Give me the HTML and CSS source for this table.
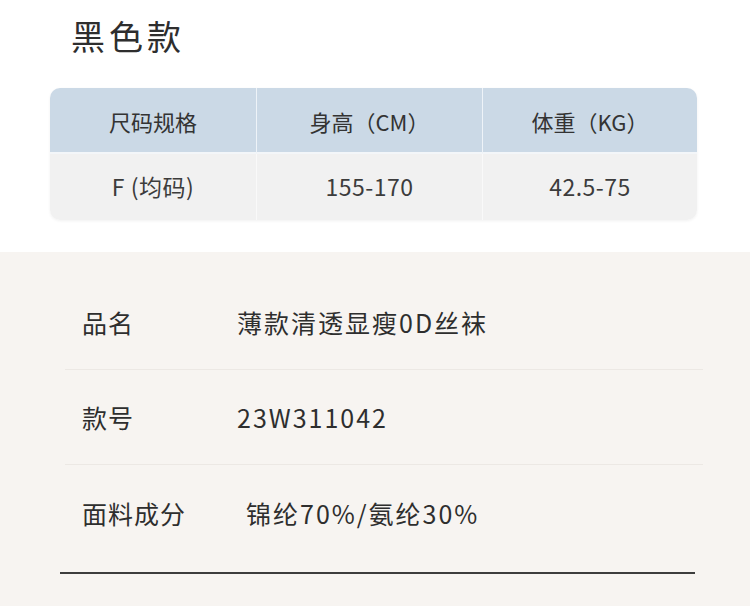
FILE: index.html
```html
<!DOCTYPE html>
<html lang="zh">
<head>
<meta charset="utf-8">
<link rel="stylesheet" href="styles.css">
</head>
<body>
<section class="top">
  <h1 class="title">黑色款</h1>
  <div class="size-table">
    <div class="cell head">尺码规格</div>
    <div class="cell head">身高（CM）</div>
    <div class="cell head">体重（KG）</div>
    <div class="cell body">F (均码)</div>
    <div class="cell body">155-170</div>
    <div class="cell body">42.5-75</div>
  </div>
</section>
<section class="info">
  <div class="row"><span class="label">品名</span><span class="value">薄款清透显瘦0D丝袜</span></div>
  <div class="row"><span class="label">款号</span><span class="value">23W311042</span></div>
  <div class="row last"><span class="label">面料成分</span><span class="value shift">锦纶70%/氨纶30%</span></div>
  <div class="rule"></div>
</section>
</body>
</html>
```
FILE: styles.css
```css
html, body {
  margin: 0;
  padding: 0;
}
body {
  width: 750px;
  height: 606px;
  overflow: hidden;
  font-family: "Noto Sans CJK SC", "Noto Sans", sans-serif;
  color: #333;
  background: #f7f4f1;
}
.top {
  background: #fff;
  height: 252px;
  padding: 16px 0 0 0;
  box-sizing: border-box;
}
.title {
  margin: 0 0 0 71px;
  font-size: 34px;
  line-height: 40px;
  font-weight: 400;
  letter-spacing: 4px;
  color: #2e2e2e;
}
.size-table {
  margin: 32px 0 0 50px;
  width: 647px;
  display: grid;
  grid-template-columns: 206px 226px 215px;
  grid-template-rows: 66px 66px;
  border-radius: 10px;
  overflow: hidden;
  box-shadow: 0 1px 3px rgba(0,0,0,0.06);
}
.cell {
  display: flex;
  align-items: center;
  justify-content: center;
  font-size: 22px;
  color: #333;
  border-left: 1px solid #eef3f8;
}
.cell:nth-child(3n+1) {
  border-left: none;
}
.head {
  background: #cbd9e6;
  border-bottom: 2px solid #f3f6f9;
  padding-top: 1px;
}
.body {
  background: #f1f1f1;
  color: #3c3c3c;
  font-size: 23px;
  letter-spacing: 0.5px;
  border-left-color: #f9f9f9;
  padding-bottom: 2px;
}
.info {
  padding: 23px 0 0 0;
}
.row {
  margin: 0 47px 0 65px;
  height: 94px;
  border-bottom: 1px solid #ece8e4;
  display: flex;
  align-items: center;
  padding-left: 17px;
  font-size: 25px;
  color: #2e2e2e;
}
.row.last {
  border-bottom: none;
  height: 96px;
}
.label {
  width: 155px;
  letter-spacing: 1px;
}
.value {
  letter-spacing: 2px;
}
.value.shift {
  margin-left: 9px;
}
.rule {
  margin: 11px 0 0 60px;
  width: 635px;
  height: 2px;
  background: #3d3d3d;
}
```
